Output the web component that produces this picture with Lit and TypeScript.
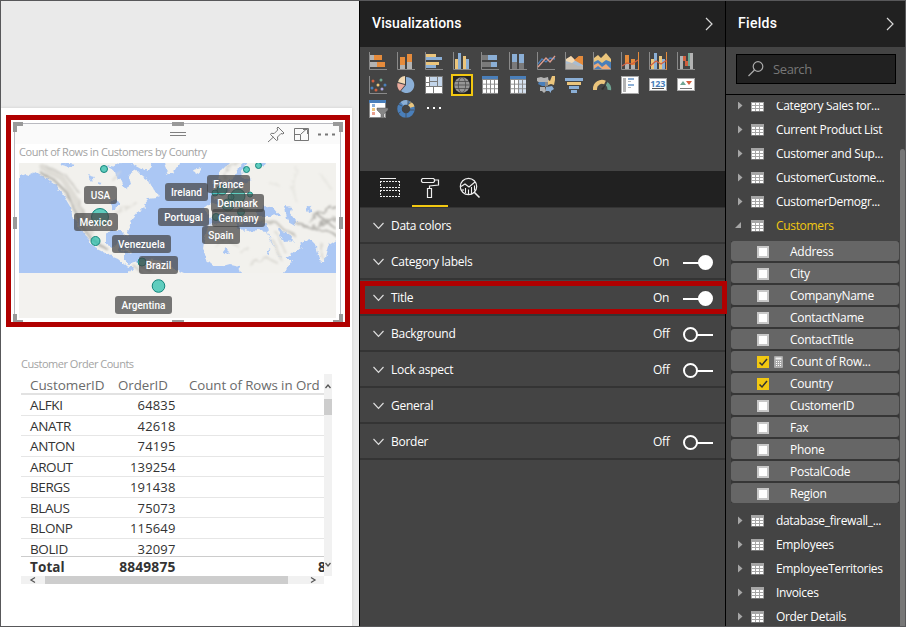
import { LitElement, html, svg, css } from "lit";
import { customElement, property } from "lit/decorators.js";

const axis = svg`<path d="M.5 0V17.5H18" fill="none" stroke="#8a8a8a"/>`;
const OR = "#e58b3c", GR = "#b3b3b3", BL = "#8bafd6", YE = "#ebc57c", DB = "#4a7fba", DG = "#7a7a7a";
const bars = (list: [number, number, number, number, string][]) =>
  svg`${list.map(([x, y, w, h, c]) => svg`<rect x=${x} y=${y} width=${w} height=${h} fill=${c}/>`)}`;

const grid = (tint: string) => svg`
  <rect x="1" y="0" width="16" height="18" fill="#8a8a8a"/><rect x="1" width="16" height="3" fill="${DB}"/>
  ${[0, 1, 2].map(r => [0, 1, 2, 3].map(c => svg`<rect x=${2 + c * 4} y=${4 + r * 4.6} width="3" height="3.7" fill=${c > 1 ? tint : "#fff"}/>`))}`;

const vizIcons = [
  svg`${axis}${bars([[1, 3, 4, 5, GR], [5, 3, 8, 5, OR], [1, 10, 7, 5, GR], [8, 10, 8, 5, OR]])}`,
  svg`${axis}${bars([[3, 5, 5, 8, OR], [3, 13, 5, 4, GR], [10, 2, 5, 8, OR], [10, 10, 5, 7, GR]])}`,
  svg`${axis}${bars([[1, 2, 10, 3, YE], [1, 5, 16, 3, BL], [1, 10, 13, 3, YE], [1, 13, 10, 3, BL]])}`,
  svg`${axis}${bars([[2, 7, 3, 10, YE], [5, 1, 3, 16, BL], [10, 4, 3, 13, YE], [13, 7, 3, 10, BL]])}`,
  svg`${axis}${bars([[1, 3, 6, 5, DG], [7, 3, 9, 5, BL], [1, 10, 9, 5, DG], [10, 10, 6, 5, BL]])}`,
  svg`${axis}${bars([[3, 2, 5, 8, BL], [3, 10, 5, 7, DG], [10, 2, 5, 9, BL], [10, 11, 5, 6, DG]])}`,
  svg`${axis}<path d="M1 12L5 7l4 3 4-4 5 1" fill="none" stroke="${DB}" stroke-width="1.3"/><path d="M1 15L9 6l4 4 5-6" fill="none" stroke="#dd9d8e" stroke-width="1.3"/>`,
  svg`<path d="M1 8l5-4 4 4 4-4h4v13H1z" fill="${OR}"/><path d="M1 7l5-3 4 4 8 5v4H1z" fill="#f3dab4"/><path d="M1 9l6 2 4-3 7 5v4H1z" fill="#a9bcd0"/><path d="M1 12l6-1 6 3h5v3H1z" fill="#b9b6b2"/><path d="M9 8l9 5V4h-4z" fill="${OR}"/>${axis}`,
  svg`<path d="M1 9l4-2 4 3 4-3 5 3v7H1z" fill="${DB}"/><path d="M1 13l4-2 4 4 4-3 5 5H1z" fill="#efab78"/><path d="M1 17l4-3 4 3z" fill="${DB}"/><path d="M1 6l4-3 3 3 5-5 5 6v3l-5-2-4 3-4-3-4 2z" fill="${YE}"/>${axis}`,
  svg`${axis}${bars([[4, 3, 4, 9, OR], [4, 12, 4, 5, GR], [10, 7, 4, 6, OR], [10, 13, 4, 4, GR], [17, 0, 1, 18, OR]])}<path d="M1 14l5-3 5 1 6-4" fill="none" stroke="#d2603f" stroke-width="1.2"/>`,
  svg`${axis}${bars([[2, 7, 3, 10, YE], [5, 1, 3, 16, BL], [10, 4, 3, 13, YE], [13, 7, 3, 10, BL], [17, 0, 1, 18, OR]])}<path d="M1 14l6-5 5 3 6-4" fill="none" stroke="#d2603f" stroke-width="1.2"/>`,
  svg`${axis}${bars([[3, 4, 3, 13, GR], [6, 4, 3, 5, "#d2603f"], [8, 9, 3, 5, "#d2603f"], [11, 1, 2, 13, "#6fa593"], [13, 1, 3, 16, GR]])}`,

  svg`${axis}${[[4, 5, "#d2603f"], [12, 4, "#6fa593"], [3, 12, DB], [9, 9, YE], [13, 13, "#a9a5e0"], [7, 14, "#d2603f"], [16, 9, DB]].map(([x, y, c]) => svg`<circle cx=${x} cy=${y} r="1.5" fill=${c}/>`)}`,
  svg`<path d="M9 9V1a8 8 0 1 1-5 14z" fill="${BL}"/><path d="M8 8L1 6a8 8 0 0 1 7-6z" fill="#f3dab4"/><path d="M8 9L3 15A8 8 0 0 1 .5 7z" fill="#e9aa9d"/>`,
  svg`${bars([[0, 0, 18, 18, DG], [1, 1, 3, 5, "#fff"], [5, 1, 7, 4, "#c3d5ea"], [13, 1, 4, 9, "#c3d5ea"], [1, 7, 3, 3, "#fff"], [5, 6, 7, 4, "#c3d5ea"], [1, 11, 7, 6, "#fff"], [9, 11, 8, 6, "#fff"]])}`,
  svg`<circle cx="9" cy="9" r="7.8" fill="#969696"/><g fill="none" stroke="#4a4a4a" stroke-width=".8"><ellipse cx="9" cy="9" rx="3.7" ry="7.5"/><path d="M2 5.500h14M1 9h16M2 12.500h14"/></g>`,
  grid("#fff"),
  grid("#d5e1f0"),
  svg`<path d="M0 2l4-1 3 1 4-1 1 6-4 2-5-2-3-2z" fill="${GR}"/><path d="M11 4l2 1 2-5h3v4l-1 5-3-1-3 1z" fill="${YE}"/><path d="M2 6h6v4H5L1 8z" fill="${DB}"/><path d="M8 6h3v4l-3 1z" fill="#8a8a8a"/><path d="M3 11h5l1 4-2 2-2-2H3z" fill="${GR}"/><path d="M9 11l6-1 2 3-3 2v2l-2-2H9z" fill="${BL}"/>`,
  svg`${bars([[0, 2, 18, 3, BL], [2, 6, 14, 3, YE], [4, 10, 10, 3, BL], [6, 14, 6, 3, BL]])}`,
  svg`<path d="M2 14v-1a7 7 0 0 1 10-6.500" fill="none" stroke="${YE}" stroke-width="4"/><path d="M13.500 7.500a7 7 0 0 1 2.800 6.500" fill="none" stroke="#6fa593" stroke-width="3.600"/><path d="M8 13l6-6-4 7z" fill="#303030"/>`,
  svg`${bars([[0, 0, 18, 18, "#a8a8a8"], [1, 1, 16, 16, "#fff"], [2, 2, 3, 14, "#b3b3b3"], [7, 2, 6, 2, BL], [7, 5, 3, 1, GR], [7, 8, 6, 2, BL], [7, 11, 3, 1, GR]])}`,
  svg`${bars([[0, 2, 18, 13, "#a8a8a8"], [1, 3, 16, 11, "#fff"], [3, 12, 12, 1, "#555"]])}<text class="n" x="1.3" y="10.5" textLength="15">123</text>`,
  svg`${bars([[0, 2, 18, 13, "#a8a8a8"], [1, 3, 16, 11, "#fff"], [3, 12, 12, 1, "#777"]])}<path d="M3 9l3-4 3 4z" fill="#6fa593"/><path d="M9 5h6l-3 4z" fill="#d2603f"/>`,

  svg`${bars([[0, 0, 17, 18, "#8a8a8a"], [1, 2, 15, 15, "#fff"], [0, 0, 17, 3, DB], [3, 4, 3, 3, BL], [3, 8, 3, 3, YE], [3, 12, 3, 3, "#e9a090"]])}<path d="M8 8h11v2l-4 4v4h-3v-4L8 10z" fill="#868686" stroke="#555" stroke-width=".5"/>`,
  svg`<circle cx="9" cy="9" r="6.500" fill="none" stroke="${DB}" stroke-width="4.500"/><path d="M5 3.800a6.500 6.500 0 0 1 6-1.100" fill="none" stroke="${BL}" stroke-width="4.500"/><path d="M12.300 3.400a6.500 6.500 0 0 1 3 3.800" fill="none" stroke="${YE}" stroke-width="4.500"/><path d="M9 13v5M3.500 12l-3 2M5 6L1 4M11 0v5M17 10h-4M12 4l4-3" stroke="#444" stroke-width=".7"/>`,
  svg`<g fill="#fff"><rect x="2" y="7" width="2" height="2"/><rect x="8" y="7" width="2" height="2"/><rect x="14" y="7" width="2" height="2"/></g>`,
];

const chevronRight = html`<svg width="8" height="14" viewBox="0 0 8 14"><path d="M1 1l6 6-6 6" fill="none" stroke="#d8d8d8" stroke-width="1.2"/></svg>`;

/* Bubble map of customers by country */
@customElement("country-map")
export class CountryMap extends LitElement {
  static styles = css`
    :host { display: block; position: relative; width: 317px; height: 155px; background: #f3f2ef; }
    svg { display: block; }
    .tag {
      position: absolute; box-sizing: border-box; height: 18px; border-radius: 3px;
      background: rgba(68, 68, 68, .72); color: #fff;
      font: 500 10px/19px Roboto, sans-serif; letter-spacing: .05px; text-align: center; white-space: nowrap;
    }
  `;
  labels: [string, number, number, number][] = [
    ["USA", 65, 23, 33], ["Mexico", 55, 50, 44], ["Venezuela", 93, 72, 59], ["Brazil", 120, 93, 39],
    ["Argentina", 96, 133, 57], ["Ireland", 146, 20, 43], ["Portugal", 139, 45, 51], ["Germany", 193, 46, 53],
    ["Spain", 183, 63, 38], ["France", 188, 12, 43], ["Denmark", 192, 31, 53],
  ];
  dots = [
    [85, 6, 3.5], [81, 54, 8.5], [76.5, 78, 4.5], [123, 99, 4], [139.5, 123, 6.3], [227.5, 6.5, 3], [239.5, 2.5, 3],
    [203, 27, 5], [196, 30, 3], [219, 33, 7], [212, 34, 3], [231, 31.5, 2.5], [209, 42, 6], [197, 54, 3.5], [222, 49, 3.5],
  ];
  render() {
    return html`
      <svg width="317" height="155" viewBox="0 0 317 155">
        <defs>
          <clipPath id="c"><rect width="317" height="110"/></clipPath>
          <filter id="rough" x="-5%" y="-5%" width="110%" height="110%">
            <feTurbulence type="fractalNoise" baseFrequency=".16" numOctaves="3" seed="4"/>
            <feDisplacementMap in="SourceGraphic" scale="6" xChannelSelector="R" yChannelSelector="G"/>
          </filter>
          <filter id="soft"><feTurbulence type="fractalNoise" baseFrequency=".15" numOctaves="2" seed="9"/>
            <feDisplacementMap in="SourceGraphic" scale="7"/><feGaussianBlur stdDeviation=".9"/></filter>
        </defs>
        <g clip-path="url(#c)">
          <rect width="317" height="110" fill="#abc7f4"/>
          <g filter="url(#rough)" fill="#f2f1ed">
            <path d="M-6-6H96L104-2 94 6 96 13 102 17 106 26 112 22 110 12 118 8 124 14 130 18 134 26 142 33 137 35 128 36 124 41 127 45 119 48 113 55 112 61 108 66 109 75 105 71 101 67 92 67 87 73 87 82 93 84 98 79 101 81 98 88 105 90 105 98 111 101 117 99 118 104 112 104 105 101 98 95 86 90 76 85 70 76 60 64 55 56 52 44 46 34 38 23 27 15 16 9 8 13 2 17 -6 18z"/>
            <path d="M109-6H128L133 2 129 9 122 5 115 1z"/>
            <path d="M144-6H162L159 3 154 11 149 11 146 4z"/>
            <path d="M175 7l7-2 1 3-6 3z"/>
            <path d="M110 110L119 99 128 96 142 98 154 106 166 111V118H108z"/>
            <path d="M190 56L186 44 191 40 200 43 199 37 194 33 204 29 211 25 216 20 211 16 205 21 199 15 203 7 216-6H330V68L319 76 310 82 306 98 302 99 298 86 293 77 289 75 285 79 280 81 274 77 267 68 258 66 264 79 281 78 282 84 272 92 264 97 258 88 252 75 249 69 247 61 238 59 234 56 229 61 225 56 222 50 218 47 219 55 225 60 219 61 211 53 205 49 197 55z"/>
            <path d="M194 28l6-2-1-7-5-3-2 5 3 2z"/>
            <path d="M190 62L205 59 216 58 218 65 228 69 238 67 248 68 253 79 263 96 274 96 268 105 259 116H223L220 103 211 101 200 104 188 99 184 86 186 73z"/>
            <path d="M102 85l10 3-1 2-9-3z"/>
          </g>
          <g fill="#abc7f4" filter="url(#rough)">
            <path d="M238 47l8-4 4 2 4-1 7 8-11 1-12 0zM266 43l6 1-1 5 6 8-1 6-7-4-2-8zM287 44l5-2 1 7-4 1z"/>
            <path d="M213 17l4-10 9-8 3 0-6 9 1 7 9 2-9 3-4 6-6-1zM240-2l9 1-2 4-6 1z"/>
            <path d="M91 38l8 0 3 4-4 0-1 5-3 0zM40-2l16 3-5 3-8-2zM69 12l7 2-3 4zM78 19l5 1-2 3zM88 3l14 3 4 6-8-2zM204 89l3-4 4 4-3 3zM248 87l3 1-1 4-3-1z"/>
            <path d="M0 14l7-3 6 2-6 6-7 5z"/>
          </g>
          <g filter="url(#soft)" fill="none" stroke-linecap="round">
            <path d="M22 10l14 8 12 12 8 18 6 14 10 14 16 10" stroke="#b4b2ac" stroke-width="2.300"/>
            <path d="M24 5l20 11 13 21 8 22 8 12" stroke="#dedcd6" stroke-width="6"/>
            <path d="M27 3l20 9 13 18M60 36l7 25" stroke="#cac8c2" stroke-width="1.500"/>
            <path d="M97 51l12-8 7-4M101 8l-8 8" stroke="#dfddd7" stroke-width="2"/>
            <path d="M204 14l8-11 9-5M200 58l12-1M219 44l12 4M238 57l20 3 8 8 11 5" stroke="#c6c4be" stroke-width="2"/>
            <path d="M277 60l17 6 17 3 9 6M289 58l12-9 15-6M299 52l17 13M295 64l21-9" stroke="#b4b2ad" stroke-width="2"/>
            <path d="M278 5l-5 21 4 12M302 12l10 14M250 20l10 3" stroke="#e9e8e3" stroke-width="2.500"/>
            <path d="M253 76l9 20M258 70l4 10 4 9M210 78l8 5M228 84l-5 6M196 82l9-5M231 101l16-7 11 6M303 81l0 13" stroke="#dcdad4" stroke-width="2"/>
            <path d="M115 103l7 6M120 102l12 6" stroke="#bdbbb5" stroke-width="1.500"/>
          </g>
        </g>
        ${this.dots.map(([x, y, r]) => svg`<circle cx=${x} cy=${y} r=${r} fill="rgba(38,190,170,.72)" stroke="#15857c"/>`)}
      </svg>
      ${this.labels.map(([t, x, y, w]) => html`<div class="tag" style="left:${x}px;top:${y}px;width:${w}px">${t}</div>`)}
    `;
  }
}

@customElement("map-visual")
export class MapVisual extends LitElement {
  static styles = css`
    :host { display: block; position: relative; box-sizing: border-box; width: 344px; height: 212px; border: 5px solid #b00000; background: #fff; padding: 3px 4px 0 3px; }
    .frame { box-sizing: border-box; height: 199px; width: 327px; border: 1px solid #b9bac0; border-bottom: 0; }
    .bar { height: 20px; background: #fafafa; display: flex; align-items: center; padding-left: 253px; }
    .title { height: 19px; box-sizing: border-box; padding-left: 4px; font: 11px/16px "Open Sans", sans-serif; letter-spacing: -.44px; color: #a3a3a3; white-space: nowrap; }
    country-map { margin-left: 4px; }
    .over { position: absolute; left: 0; top: 0; }
  `;
  render() {
    return html`
      <div class="frame">
        <div class="bar">
          <svg width="70" height="18" viewBox="0 0 70 18" fill="none" stroke="#777">
            <path d="M10 2l6 6-1 1-2-.5-3.500 3.500.2 3-1.200.5-6-6 .7-1.200 3 .2L9.700 5 9 3zM5.500 12L0 17"/>
            <path d="M26.500 3.500h14v12h-14zM26.500 9.500h6v6M33 9l6-5.500M35 4.500h4.500V9"/>
            <path d="M50 9.500h3M57 9.500h3M64 9.500h3" stroke-width="2"/>
          </svg>
        </div>
        <div class="title">Count of Rows in Customers by Country</div>
        <country-map></country-map>
      </div>
      <svg class="over" width="334" height="202" viewBox="0 0 334 202" fill="#999">
        <path d="M2 2h10v4H6v6H2zM322 2h10v10h-4V6h-6zM161 2h12v4h-12zM2 97h4v12H2zM328 97h4v12h-4zM2 194h4v6h6v2H2zM328 194h4v8h-10v-2h6zM161 200h12v2h-12z"/>
        <path d="M159 12.500h16M159 15.500h16" stroke="#808080"/>
      </svg>
    `;
  }
}

@customElement("order-table")
export class OrderTable extends LitElement {
  static styles = css`
    :host { display: block; width: 311px; font: 13px "Open Sans", sans-serif; color: #333; }
    .title { font-size: 11px; line-height: 16px; color: #a3a3a3; letter-spacing: -.48px; height: 18px; white-space: nowrap; }
    .box { display: flex; }
    .grid { width: 303px; overflow: hidden; }
    .r { display: grid; grid-template-columns: 88px 66px 149px; height: 20.5px; box-sizing: border-box; border-bottom: 1px solid #e6e6e6; line-height: 21px; padding-left: 9px; white-space: nowrap; }
    .r span:first-child { font-size: 13.5px; letter-spacing: -.4px; }
    .num { width: 57.500px; text-align: right; letter-spacing: .15px; }
    .h { height: 21px; line-height: 22px; color: #6b6b6b; border-bottom: 2px solid #e2e2e2; font-size: 13.3px; letter-spacing: -.05px; }
    .h span:first-child { letter-spacing: -.08px; }
    .h .c { padding-left: 5px; letter-spacing: -.07px; }
    .body { height: 161px; overflow: hidden; border-bottom: 1px solid #ccc; }
    .t { font-weight: 700; border: 0; height: 19px; line-height: 20px; font-size: 13.5px; }
    .t span:first-child { letter-spacing: .1px; }
    .t .num { font-size: 13.8px; letter-spacing: .15px; }
    .t .c { padding-left: 134px; }
    .vs { width: 8px; height: 202px; background: #f1f1f1; }
    .vs i { display: block; height: 16px; background: #cdcdcd; }
    svg { display: block; fill: none; stroke: #555; stroke-width: 1.3; }
    .hs { width: 303px; height: 8px; background: #f1f1f1; display: flex; justify-content: space-between; }
    .hs i { width: 243px; background: #cdcdcd; }
  `;
  rows = [["ALFKI", "64835"], ["ANATR", "42618"], ["ANTON", "74195"], ["AROUT", "139254"], ["BERGS", "191438"], ["BLAUS", "75073"], ["BLONP", "115649"], ["BOLID", "32097"]];
  render() {
    return html`
      <div class="title">Customer Order Counts</div>
      <div class="box">
        <div class="grid">
          <div class="r h"><span>CustomerID</span><span>OrderID</span><span class="c">Count of Rows in Ord</span></div>
          <div class="body">${this.rows.map(([a, b]) => html`<div class="r"><span>${a}</span><span class="num">${b}</span></div>`)}</div>
          <div class="r t"><span>Total</span><span class="num">8849875</span><span class="c">8</span></div>
        </div>
        <div class="vs">
          <svg width="8" height="25"><path d="M1.500 14L4 11l2.500 3"/></svg><i></i>
          <svg width="8" height="161"><path d="M1.500 148L4 151l2.500-3"/></svg>
        </div>
      </div>
      <div class="hs">
        <svg width="24" height="8"><path d="M14 1.500L10 4l4 2.500"/></svg><i></i>
        <svg width="36" height="8"><path d="M23 1.500L27 4l-4 2.500"/></svg>
      </div>
    `;
  }
}

@customElement("format-row")
export class FormatRow extends LitElement {
  @property() label = "";
  @property() state = "";
  static styles = css`
    :host { display: flex; align-items: center; height: 36px; box-sizing: border-box; border-bottom: 2px solid #343434; padding: 1px 12px 0 13px; color: #fff; font: 12px "Open Sans", sans-serif; }
    .label { flex: 1; margin-left: 7px; letter-spacing: -.27px; }
    .state { width: 30px; letter-spacing: -.3px; }
    svg { fill: none; }
    .toggle { margin-top: 2px; }
  `;
  render() {
    const on = this.state === "On";
    return html`
      <svg width="11" height="8"><path d="M.5 1L5.500 6.300 10.500 1" stroke="#ddd" stroke-width="1.200"/></svg>
      <span class="label">${this.label}</span>
      ${this.state ? html`<span class="state">${this.state}</span>
        <svg class="toggle" width="30" height="17" stroke="#fff" stroke-width="2">
          ${on ? svg`<path d="M0 9h20"/><circle cx="22.500" cy="8.500" r="6.500" fill="#fff"/>`
            : svg`<circle cx="7.500" cy="8.500" r="6.500"/><path d="M14 9h16"/>`}
        </svg>` : ""}
    `;
  }
}

@customElement("viz-pane")
export class VizPane extends LitElement {
  static styles = css`
    :host { display: block; position: relative; width: 365px; background: #444; border-right: 1px solid #000; box-sizing: content-box; }
    .head { height: 46px; background: #212121; display: flex; align-items: center; justify-content: space-between; padding: 0 12px; color: #fff; font: 500 14px Roboto, sans-serif; box-sizing: border-box; }
    .head span { margin-top: -2px; letter-spacing: .1px; }
    .icons { display: grid; grid-template-columns: repeat(12, 28px); grid-auto-rows: 24px; padding: 5px 0 0 9px; height: 119px; }
    .icons svg { display: block; overflow: visible; }
    .icons .sel { background: #252525; outline: 2px solid #f2c811; }
    .n { font: 700 9px "Noto Sans", sans-serif; fill: #4a7fba; }
    .tabs { height: 36px; background: #212121; display: flex; padding-left: 12px; }
    .tab { width: 36px; height: 36px; display: grid; place-items: center; margin-right: 4px; box-sizing: border-box; border-bottom: 2px solid transparent; }
    .tab.on { border-color: #f2c811; }
    .tab svg { fill: none; stroke: #eee; }
    .rows { border-top: 1px solid #343434; height: 251px; }
    .mark { position: absolute; left: 0; top: 280px; width: 357px; height: 23px; border: 5px solid #b00000; z-index: 2; }
  `;
  rows = [["Data colors", ""], ["Category labels", "On"], ["Title", "On"], ["Background", "Off"], ["Lock aspect", "Off"], ["General", ""], ["Border", "Off"]];
  render() {
    return html`
      <div class="head"><span>Visualizations</span>${chevronRight}</div>
      <div class="icons">${vizIcons.map((g, i) => html`<svg class=${i === 15 ? "sel" : ""} width="18" height="18" viewBox="0 0 18 18">${g}</svg>`)}</div>
      <div class="tabs">
        <div class="tab"><svg width="20" height="20"><path d="M0 .5h16" /><path d="M0 3.500h20M0 9.500h20M0 12.500h20M0 18.500h20M.5 3v7M19.500 3v7M.5 12v7M19.500 12v7" stroke-dasharray="2 1"/></svg></div>
        <div class="tab on"><svg width="20" height="22"><path d="M2.500 1.500h11l1 1v2l-1 1h-11l-1-1v-2zM14.500 3h4v5l-9 1v3M7.500 11.500h4v9h-4z" stroke-width="1.200"/></svg></div>
        <div class="tab"><svg width="22" height="22"><circle cx="9.500" cy="9.500" r="8.200" stroke-width="1.200"/><path d="M15 15l5.500 5.500" stroke-width="1.600"/><path d="M2 9.500l4-2.500 4 3 6-5M6.500 11v5M9.500 12.500v5M12.500 10v7M4 12v2M15.500 8.500v5" stroke-width="1.100"/></svg></div>
      </div>
      <div class="rows">${this.rows.map(([l, s]) => html`<format-row label=${l} state=${s}></format-row>`)}</div>
      <div class="mark"></div>
    `;
  }
}

@customElement("fields-pane")
export class FieldsPane extends LitElement {
  static styles = css`
    :host { display: flex; flex-direction: column; width: 179px; background: #444; color: #fff; font: 12px "Open Sans", sans-serif; overflow: hidden; }
    .head { flex: none; height: 46px; background: #212121; display: flex; align-items: center; justify-content: space-between; padding: 0 11px 0 12px; font: 500 14px Roboto, sans-serif; box-sizing: border-box; }
    .head span { margin-top: -2px; letter-spacing: .3px; }
    .find { flex: none; height: 48px; box-sizing: border-box; padding: 7px 9px 0 10px; border-bottom: 1px solid #000; }
    .box { height: 30px; box-sizing: border-box; border: 1px solid #000; background: #212121; display: flex; align-items: center; padding-left: 11px; gap: 9px; color: #777; font-size: 13px; letter-spacing: -.4px; }
    .list { position: relative; flex: 1; margin-top: 7px; overflow: hidden; }
    .scroll { margin-top: -9px; }
    .t { height: 24px; display: flex; align-items: center; padding-left: 8px; white-space: nowrap; letter-spacing: -.33px; }
    .t svg { margin-right: 12px; }
    .t.open { color: #f2c811; }
    .fs { background: #363636; margin: 4px 5px 5px; display: grid; gap: 2px; width: 168px; }
    .f { height: 20px; border-radius: 3px; background: #666; display: flex; align-items: center; padding-left: 26px; white-space: nowrap; letter-spacing: -.27px; box-sizing: border-box; }
    .f svg { margin-right: 5px; margin-top: 1px; }
    .f .name { padding-top: 1px; }
    .f .calc { width: 16px; display: flex; }
    .bar { position: absolute; right: 0; top: 47px; bottom: 0; width: 5px; border-radius: 3px 3px 0 0; background: #777; }
  `;
  before = ["Category Sales for...", "Current Product List", "Customer and Sup...", "CustomerCustome...", "CustomerDemogr...", "Customers"];
  fields = ["Address", "City", "CompanyName", "ContactName", "ContactTitle", "Count of Row...", "Country", "CustomerID", "Fax", "Phone", "PostalCode", "Region"];
  after = ["database_firewall_...", "Employees", "EmployeeTerritories", "Invoices", "Order Details"];
  table(name: string) {
    const open = name === "Customers";
    return html`<div class="t ${open ? "open" : ""}">
      <svg width="30" height="13" fill="#a6a6a6"><path d=${open ? "M1 9h6V3z" : "M4 2.500v8L8.500 6.500z"}/><rect x="17" y="1" width="13" height="11.500"/><path d="M18 4h3v2h-3zm4 0h3v2h-3zm4 0h3v2h-3zM18 7h3v2h-3zm4 0h3v2h-3zm4 0h3v2h-3zM18 10h3v2h-3zm4 0h3v2h-3zm4 0h3v2h-3z" fill="#fff"/></svg><span>${name}</span></div>`;
  }
  render() {
    return html`
      <div class="head"><span>Fields</span>${chevronRight}</div>
      <div class="find"><div class="box"><svg width="16" height="16" fill="none" stroke="#aaa" stroke-width="1.200"><circle cx="10" cy="5.500" r="4.800"/><path d="M6.500 9L.5 15"/></svg><span>Search</span></div></div>
      <div class="list">
        <div class="scroll">
          ${this.before.map(n => this.table(n))}
          <div class="fs">${this.fields.map(n => {
            const on = n === "Count of Row..." || n === "Country";
            return html`<div class="f">
              <svg width="12" height="12">${on ? svg`<rect width="12" height="12" fill="#f2c811"/><path d="M2.500 6.500L5 9l5-6" fill="none" stroke="#333" stroke-width="1.500"/>` : svg`<rect width="12" height="12" fill="#c8c8c8"/><rect x="2" y="2" width="8" height="8" fill="#fff"/>`}</svg>
              <span class="calc">${n === "Count of Row..." ? html`<svg width="9" height="12"><rect width="9" height="12" rx="1" fill="#aaa"/><path d="M1.500 1.500h6v2h-6z" fill="#eee"/><path d="M2.500 5v6M4.500 5v6M6.500 5v6" stroke="#fff" stroke-dasharray="1 1"/></svg>` : ""}</span>
              <span class="name">${n}</span></div>`;
          })}</div>
          ${this.after.map(n => this.table(n))}
        </div>
        <div class="bar"></div>
      </div>
    `;
  }
}

@customElement("app-root")
export class AppRoot extends LitElement {
  static styles = css`
    :host { display: flex; box-sizing: border-box; width: 906px; height: 627px; border: 1px solid #58585a; background: #eaeaea; overflow: hidden; }
    .report { width: 359px; flex: none; border-right: 1px solid #000; box-sizing: border-box; padding-top: 107px; }
    .page { width: 351px; height: 520px; box-sizing: border-box; background: #fff; box-shadow: 0 0 3px #ccc; padding: 7px 0 0 5px; }
    order-table { margin: 29px 0 0 15px; }
    viz-pane, fields-pane { flex: none; }
    viz-pane { z-index: 1; }
  `;
  render() {
    return html`
      <div class="report"><div class="page"><map-visual></map-visual><order-table></order-table></div></div>
      <viz-pane></viz-pane>
      <fields-pane></fields-pane>
    `;
  }
}
